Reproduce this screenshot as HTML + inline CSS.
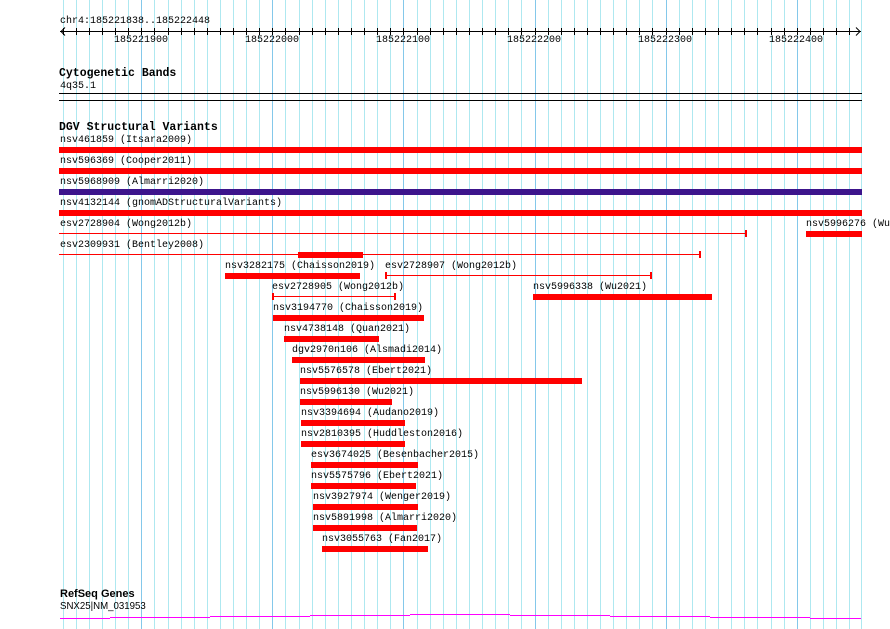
<!DOCTYPE html>
<html><head><meta charset="utf-8"><style>
html,body{margin:0;padding:0;}
body{width:890px;height:629px;position:relative;overflow:hidden;background:#fff;font-family:"Liberation Mono","DejaVu Sans Mono",monospace;font-size:10px;color:#000;}
.t{position:absolute;white-space:pre;line-height:11px;}
.b{font-weight:bold;font-size:11.5px;}
.bar{position:absolute;height:6px;background:#f00;}
.ln{position:absolute;height:1px;background:#f00;}
.tk{position:absolute;width:2px;height:7px;background:#f00;}
.k{position:absolute;height:1px;background:#000;}
.m{position:absolute;height:1px;background:#f0f;}
svg{position:absolute;left:0;top:0;}
</style></head><body>
<svg width="890" height="629">
<g stroke="#aee8f0" stroke-width="1">
<path d="M63.5 0V629M76.5 0V629M89.5 0V629M102.5 0V629M115.5 0V629M128.5 0V629M154.5 0V629M168.5 0V629M181.5 0V629M194.5 0V629M207.5 0V629M220.5 0V629M233.5 0V629M246.5 0V629M259.5 0V629M285.5 0V629M299.5 0V629M312.5 0V629M325.5 0V629M338.5 0V629M351.5 0V629M364.5 0V629M377.5 0V629M390.5 0V629M417.5 0V629M430.5 0V629M443.5 0V629M456.5 0V629M469.5 0V629M482.5 0V629M495.5 0V629M508.5 0V629M521.5 0V629M548.5 0V629M561.5 0V629M574.5 0V629M587.5 0V629M600.5 0V629M613.5 0V629M626.5 0V629M639.5 0V629M652.5 0V629M679.5 0V629M692.5 0V629M705.5 0V629M718.5 0V629M731.5 0V629M744.5 0V629M757.5 0V629M771.5 0V629M784.5 0V629M810.5 0V629M823.5 0V629M836.5 0V629M849.5 0V629M861.5 0V629"/>
</g>
<g stroke="#84c8ea" stroke-width="1">
<path d="M141.5 0V629M272.5 0V629M403.5 0V629M535.5 0V629M666.5 0V629M797.5 0V629"/>
</g>
<g stroke="#000" stroke-width="1">
<path d="M60 31.5H861"/>
<path d="M63.5 28V35M76.5 28V35M89.5 28V35M102.5 28V35M115.5 28V35M128.5 28V35M141.5 28V35M154.5 28V35M168.5 28V35M181.5 28V35M194.5 28V35M207.5 28V35M220.5 28V35M233.5 28V35M246.5 28V35M259.5 28V35M272.5 28V35M285.5 28V35M299.5 28V35M312.5 28V35M325.5 28V35M338.5 28V35M351.5 28V35M364.5 28V35M377.5 28V35M390.5 28V35M403.5 28V35M417.5 28V35M430.5 28V35M443.5 28V35M456.5 28V35M469.5 28V35M482.5 28V35M495.5 28V35M508.5 28V35M521.5 28V35M535.5 28V35M548.5 28V35M561.5 28V35M574.5 28V35M587.5 28V35M600.5 28V35M613.5 28V35M626.5 28V35M639.5 28V35M652.5 28V35M666.5 28V35M679.5 28V35M692.5 28V35M705.5 28V35M718.5 28V35M731.5 28V35M744.5 28V35M757.5 28V35M771.5 28V35M784.5 28V35M797.5 28V35M810.5 28V35M823.5 28V35M836.5 28V35M849.5 28V35"/>
<path d="M65 27.5L61 31.5L65 35.5M856 27.5L860 31.5L856 35.5" fill="none"/>
</g>
</svg>

<div class="t" style="left:60px;top:16px">chr4:185221838..185222448</div>
<div class="t" style="left:114px;top:35px">185221900</div>
<div class="t" style="left:245px;top:35px">185222000</div>
<div class="t" style="left:376px;top:35px">185222100</div>
<div class="t" style="left:507px;top:35px">185222200</div>
<div class="t" style="left:638px;top:35px">185222300</div>
<div class="t" style="left:769px;top:35px">185222400</div>

<div class="t b" style="left:59px;top:68px">Cytogenetic Bands</div>
<div class="t" style="left:60px;top:81px">4q35.1</div>
<div class="k" style="left:59px;top:93px;width:803px"></div>
<div class="k" style="left:59px;top:100px;width:803px"></div>

<div class="t b" style="left:59px;top:122px">DGV Structural Variants</div>
<div class="t" style="left:60px;top:135px">nsv461859 (Itsara2009)</div>
<div class="bar" style="left:59px;top:147px;width:803px"></div>
<div class="t" style="left:60px;top:156px">nsv596369 (Cooper2011)</div>
<div class="bar" style="left:59px;top:168px;width:803px"></div>
<div class="t" style="left:60px;top:177px">nsv5968909 (Almarri2020)</div>
<div class="bar" style="left:59px;top:189px;width:803px;background:#3c148c"></div>
<div class="t" style="left:60px;top:198px">nsv4132144 (gnomADStructuralVariants)</div>
<div class="bar" style="left:59px;top:210px;width:803px"></div>
<div class="t" style="left:60px;top:219px">esv2728904 (Wong2012b)</div>
<div class="ln" style="left:59px;top:233px;width:687px"></div>
<div class="tk" style="left:745px;top:230px"></div>
<div class="t" style="left:806px;top:219px">nsv5996276 (Wu2021)</div>
<div class="bar" style="left:806px;top:231px;width:56px"></div>
<div class="t" style="left:60px;top:240px">esv2309931 (Bentley2008)</div>
<div class="ln" style="left:59px;top:254px;width:641px"></div>
<div class="tk" style="left:699px;top:251px"></div>
<div class="bar" style="left:298px;top:252px;width:65px"></div>

<div class="t" style="left:225px;top:261px">nsv3282175 (Chaisson2019)</div>
<div class="bar" style="left:225px;top:273px;width:135px"></div>
<div class="t" style="left:385px;top:261px">esv2728907 (Wong2012b)</div>
<div class="ln" style="left:385px;top:275px;width:266px"></div>
<div class="tk" style="left:385px;top:272px"></div>
<div class="tk" style="left:650px;top:272px"></div>

<div class="t" style="left:272px;top:282px">esv2728905 (Wong2012b)</div>
<div class="ln" style="left:272px;top:296px;width:123px"></div>
<div class="tk" style="left:272px;top:293px"></div>
<div class="tk" style="left:394px;top:293px"></div>
<div class="t" style="left:533px;top:282px">nsv5996338 (Wu2021)</div>
<div class="bar" style="left:533px;top:294px;width:179px"></div>

<div class="t" style="left:273px;top:303px">nsv3194770 (Chaisson2019)</div>
<div class="bar" style="left:273px;top:315px;width:151px"></div>
<div class="t" style="left:284px;top:324px">nsv4738148 (Quan2021)</div>
<div class="bar" style="left:284px;top:336px;width:95px"></div>
<div class="t" style="left:292px;top:345px">dgv2970n106 (Alsmadi2014)</div>
<div class="bar" style="left:292px;top:357px;width:133px"></div>
<div class="t" style="left:300px;top:366px">nsv5576578 (Ebert2021)</div>
<div class="bar" style="left:300px;top:378px;width:282px"></div>
<div class="t" style="left:300px;top:387px">nsv5996130 (Wu2021)</div>
<div class="bar" style="left:300px;top:399px;width:92px"></div>
<div class="t" style="left:301px;top:408px">nsv3394694 (Audano2019)</div>
<div class="bar" style="left:301px;top:420px;width:104px"></div>
<div class="t" style="left:301px;top:429px">nsv2810395 (Huddleston2016)</div>
<div class="bar" style="left:301px;top:441px;width:104px"></div>
<div class="t" style="left:311px;top:450px">esv3674025 (Besenbacher2015)</div>
<div class="bar" style="left:311px;top:462px;width:107px"></div>
<div class="t" style="left:311px;top:471px">nsv5575796 (Ebert2021)</div>
<div class="bar" style="left:311px;top:483px;width:105px"></div>
<div class="t" style="left:313px;top:492px">nsv3927974 (Wenger2019)</div>
<div class="bar" style="left:313px;top:504px;width:105px"></div>
<div class="t" style="left:313px;top:513px">nsv5891998 (Almarri2020)</div>
<div class="bar" style="left:313px;top:525px;width:104px"></div>
<div class="t" style="left:322px;top:534px">nsv3055763 (Fan2017)</div>
<div class="bar" style="left:322px;top:546px;width:106px"></div>

<div class="t" style="left:60px;top:589px;font-family:'Liberation Sans',sans-serif;font-size:11px;font-weight:bold">RefSeq Genes</div>
<div class="t" style="left:60px;top:601px;font-family:'Liberation Sans',sans-serif;font-size:10.5px;transform:scaleX(0.92);transform-origin:left">SNX25|NM_031953</div>
<div class="m" style="left:60px;top:618px;width:50px"></div>
<div class="m" style="left:110px;top:617px;width:100px"></div>
<div class="m" style="left:210px;top:616px;width:100px"></div>
<div class="m" style="left:310px;top:615px;width:100px"></div>
<div class="m" style="left:410px;top:614px;width:100px"></div>
<div class="m" style="left:510px;top:615px;width:100px"></div>
<div class="m" style="left:610px;top:616px;width:100px"></div>
<div class="m" style="left:710px;top:617px;width:100px"></div>
<div class="m" style="left:810px;top:618px;width:51px"></div>
</body></html>
